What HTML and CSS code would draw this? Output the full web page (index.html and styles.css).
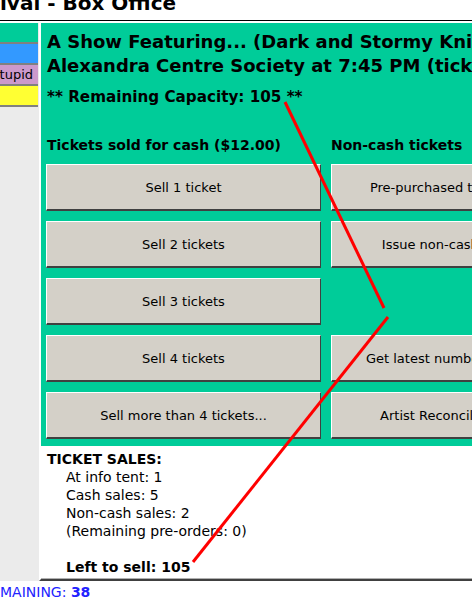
FILE: index.html
```
<!DOCTYPE html>
<html>
<head>
<meta charset="utf-8">
<link rel="stylesheet" href="styles.css">
</head>
<body>
<div class="page">
  <header class="topbar"><h1 class="title">ival - Box Office</h1></header>
  <div class="layout">
    <aside class="sidebar">
      <div class="srow s-teal"></div>
      <div class="srow s-blue"></div>
      <div class="srow s-pink"><span>tupid</span></div>
      <div class="srow s-yellow"></div>
    </aside>
    <main class="main">
      <section class="panel">
        <h2 class="show">A Show Featuring... (Dark and Stormy Knights)<br>Alexandra Centre Society at 7:45 PM (tickets)</h2>
        <p class="capacity">** Remaining Capacity: 105 **</p>
        <div class="grid">
          <h3 class="colhead">Tickets sold for cash ($12.00)</h3>
          <h3 class="colhead">Non-cash tickets</h3>
          <button class="btn">Sell 1 ticket</button>
          <button class="btn">Pre-purchased tickets (pickup)</button>
          <button class="btn">Sell 2 tickets</button>
          <button class="btn">Issue non-cash tickets to...</button>
          <button class="btn">Sell 3 tickets</button>
          <div class="empty"></div>
          <button class="btn">Sell 4 tickets</button>
          <button class="btn">Get latest numbers from server</button>
          <button class="btn">Sell more than 4 tickets...</button>
          <button class="btn">Artist Reconciliation Report</button>
        </div>
      </section>
      <section class="sales">
        <div class="sales-title">TICKET SALES:</div>
        <div class="sales-list">
          <div>At info tent: 1</div>
          <div>Cash sales: 5</div>
          <div>Non-cash sales: 2</div>
          <div>(Remaining pre-orders: 0)</div>
          <div class="blank"></div>
          <div class="left">Left to sell: 105</div>
        </div>
      </section>
    </main>
  </div>
  <footer class="footer">MAINING: <b>38</b></footer>
</div>
<svg class="annot" width="472" height="603" viewBox="0 0 472 603">
  <path d="M285 102 L384 308" stroke="#ff0000" stroke-width="3" fill="none"/>
  <path d="M388 317 L193 562" stroke="#ff0000" stroke-width="3" fill="none"/>
</svg>
</body>
</html>
```
FILE: styles.css
```
html, body {
  margin: 0;
  padding: 0;
  background: #ffffff;
}
body {
  width: 472px;
  height: 603px;
  overflow: hidden;
  position: relative;
  font-family: "DejaVu Sans", Verdana, sans-serif;
  color: #000;
}
.page {
  width: 660px;
}
.topbar {
  height: 20px;
  border-bottom: 1px solid #000;
  overflow: hidden;
}
.title {
  margin: -7px 0 0 0;
  font-size: 20px;
  line-height: 20px;
  font-weight: bold;
  white-space: nowrap;
}
.layout {
  display: flex;
  margin-top: 2px;
  align-items: stretch;
}
.sidebar {
  width: 39px;
  flex: none;
  background: #ebebeb;
}
.srow {
  width: 38px;
  height: 19px;
  border-bottom: 2px solid #808080;
  display: flex;
  justify-content: flex-end;
  align-items: center;
  overflow: hidden;
  font-size: 13px;
  white-space: nowrap;
}
.srow span {
  padding-right: 5px;
}
.s-teal { background: #00cc99; }
.s-blue { background: #3399ff; }
.s-pink { background: #cc99cc; }
.s-yellow { background: #ffff33; }
.main {
  flex: none;
  width: 600px;
  border-left: 2px solid #ffffff;
  border-bottom: 2px solid #404040;
  box-shadow: inset 0 -1px 0 #b0b0b0;
}
.panel {
  background: #00cc99;
  padding: 7px 5px 7px 5px;
}
.show {
  margin: 0 0 0 1px;
  font-size: 18px;
  line-height: 24px;
  font-weight: bold;
  white-space: nowrap;
}
.capacity {
  margin: 10px 0 0 1px;
  font-size: 15.2px;
  line-height: 18px;
  font-weight: bold;
}
.grid {
  margin-top: 31px;
  display: grid;
  grid-template-columns: 275px 275px;
  column-gap: 10px;
  row-gap: 10px;
}
.colhead {
  margin: 0;
  font-size: 14px;
  line-height: 17px;
  font-weight: bold;
  white-space: nowrap;
}
.colhead:first-child {
  margin-left: 1px;
}
.btn {
  height: 47px;
  margin: 0;
  padding: 0;
  background: #d4d0c8;
  border-style: solid;
  border-width: 1px 1px 2px 1px;
  border-color: #ffffff #404040 #404040 #ffffff;
  font-family: "DejaVu Sans", Verdana, sans-serif;
  font-size: 13px;
  color: #000;
  text-align: center;
  white-space: nowrap;
  overflow: hidden;
}
.sales {
  padding: 4px 0 3px 6px;
  font-size: 14px;
  line-height: 18px;
}
.sales-title {
  font-weight: bold;
}
.sales-list {
  padding-left: 19px;
}
.blank {
  height: 18px;
}
.left {
  font-weight: bold;
}
.footer {
  margin-top: 2px;
  font-size: 14px;
  line-height: 18px;
  color: #2222ff;
}
.footer b {
  font-weight: bold;
}
.annot {
  position: absolute;
  left: 0;
  top: 0;
  pointer-events: none;
}
```
